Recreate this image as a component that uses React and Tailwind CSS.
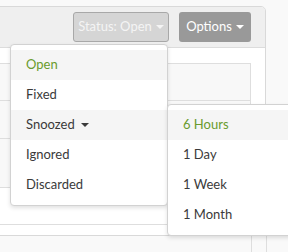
import React from "react";

const Caret = ({ className = "" }) => (
  <span
    className={`inline-block w-0 h-0 border-x-[4px] border-x-transparent border-t-[4px] ${className}`}
  />
);

export default function App() {
  const statuses = ["Open", "Fixed", "Snoozed", "Ignored", "Discarded"];
  const snooze = ["6 Hours", "1 Day", "1 Week", "1 Month"];

  return (
    <div className="relative w-[288px] h-[252px] overflow-hidden bg-[#f9f9f9] font-['Lato',sans-serif] text-[13px] text-[#3a3a3a]">
      {/* panel */}
      <div className="mt-[6px] -ml-px w-[267px] h-[230px] bg-white border border-[#d9d9d9] rounded-tr-[5px]">
        <div className="h-[41px] bg-[#efefef] border-b border-[#dcdcdc] rounded-tr-[4px] flex justify-end items-start gap-[10px] pt-[5px] pr-[14px]">
          <button className="h-[30px] w-[96px] rounded-[3px] bg-[#d5d5d5] border border-[#a8a8a8] text-[#f4f4f4] flex items-center justify-center gap-[4px]">
            Status: Open <Caret className="border-t-[#f4f4f4]" />
          </button>
          <button className="h-[30px] w-[72px] rounded-[3px] bg-[#999999] text-white flex items-center justify-center gap-[4px]">
            Options <Caret className="border-t-white" />
          </button>
        </div>
        <div className="pt-[15px] pr-[14px]">
          <div className="border-t border-r border-[#dedede]">
            <div className="h-[37px] border-b border-[#dedede] bg-[#f8f8f8]" />
            <div className="h-[38px] border-b border-[#dedede] bg-[#f8f8f8]" />
            <div className="h-[49px] border-b border-[#dedede] bg-[#f8f8f8]" />
            <div className="h-[37px] border-b border-[#dedede]" />
          </div>
        </div>
      </div>
      <div className="-ml-px w-[268px] h-[20px] flex justify-end">
        <div className="w-[16px] h-full border-l border-r border-[#dedede]" />
      </div>

      {/* status menu */}
      <div className="absolute left-[10px] top-[44px] w-[158px] bg-white border border-[#d2d2d2] rounded-[4px] shadow-[0_2px_4px_rgba(0,0,0,0.12)] pt-[5px] pb-[5px]">
        {statuses.map((s, i) => (
          <div
            key={s}
            className={`h-[30px] flex items-center gap-[6px] pl-[15px] ${
              i === 0 || i === 2 ? "bg-[#f5f5f5]" : ""
            } ${i === 0 ? "text-[#6a9b2e]" : ""}`}
          >
            {s}
            {s === "Snoozed" && <Caret className="border-t-[#3a3a3a]" />}
          </div>
        ))}
      </div>

      {/* snooze submenu */}
      <div className="absolute left-[167px] top-[104px] w-[140px] bg-white border border-[#d2d2d2] rounded-[4px] shadow-[0_2px_4px_rgba(0,0,0,0.12)] pt-[5px] pb-[5px]">
        {snooze.map((s, i) => (
          <div
            key={s}
            className={`h-[30px] flex items-center pl-[15px] ${
              i === 0 ? "bg-[#f5f5f5] text-[#6a9b2e]" : ""
            }`}
          >
            {s}
          </div>
        ))}
      </div>
    </div>
  );
}
